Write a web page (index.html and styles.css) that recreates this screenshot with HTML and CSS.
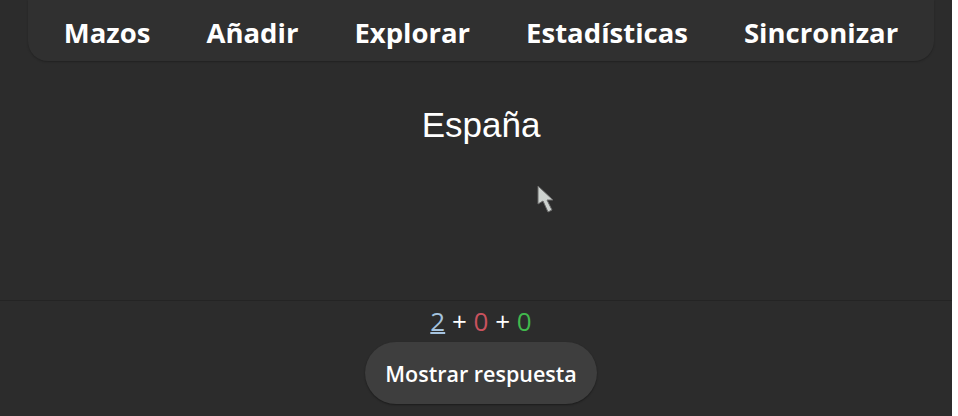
FILE: index.html
```html
<!DOCTYPE html>
<html lang="es">
<head>
<meta charset="utf-8">
<link rel="stylesheet" href="styles.css">
</head>
<body>
<div class="page">
  <div class="top">
    <nav class="navbar">
      <span class="nav-item">Mazos</span>
      <span class="nav-item">Añadir</span>
      <span class="nav-item">Explorar</span>
      <span class="nav-item">Estadísticas</span>
      <span class="nav-item">Sincronizar</span>
    </nav>
    <div class="card">
      <div class="question">España</div>
      <svg class="cursor" width="20" height="30" viewBox="0 0 20 30">
        <polygon points="1,1 1,19 6,16 11,27 15,25 10,15 16,15" fill="#cdd2cf" stroke="#6a6a6a" stroke-width="1"/>
      </svg>
    </div>
  </div>
  <div class="bottom">
    <div class="counts"><span class="new">2</span> + <span class="learn">0</span> + <span class="review">0</span></div>
    <button class="answer">Mostrar respuesta</button>
  </div>
</div>
</body>
</html>
```
FILE: styles.css
```css
html {
  background: #ffffff;
  margin: 0;
  height: 100%;
}
body {
  margin: 0;
  width: 952px;
  height: 416px;
  background: #2c2c2c;
  overflow: hidden;
}
.page {
  display: flex;
  flex-direction: column;
  height: 416px;
}
.top {
  height: 300px;
  display: flex;
  flex-direction: column;
  border-bottom: 1px solid #242424;
}
.navbar {
  margin-left: 28px;
  width: 906px;
  height: 61px;
  box-sizing: border-box;
  background: #303030;
  border-radius: 0 0 20px 20px;
  box-shadow: 0 1px 2px rgba(0, 0, 0, 0.25);
  display: flex;
  justify-content: center;
  align-items: flex-end;
  gap: 56px;
  padding-bottom: 13px;
  font-family: "Open Sans", "Noto Sans", sans-serif;
  font-weight: 700;
  font-size: 27.5px;
  color: #ffffff;
}
.nav-item {
  line-height: 30px;
}
.card {
  position: relative;
  padding-left: 10px;
  padding-top: 44px;
  text-align: center;
}
.question {
  font-family: "Liberation Sans", Arial, sans-serif;
  font-size: 35px;
  line-height: 40px;
  color: #ffffff;
}
.cursor {
  position: absolute;
  left: 537px;
  top: 124px;
}
.bottom {
  padding-left: 10px;
  display: flex;
  flex-direction: column;
  align-items: center;
  font-family: "Open Sans", "Noto Sans", sans-serif;
}
.counts {
  margin-top: 5px;
  font-size: 26px;
  line-height: 30px;
  height: 30px;
  color: #ffffff;
}
.new {
  color: #a5c3df;
  text-decoration: underline;
  text-decoration-thickness: 2px;
}
.learn {
  color: #c9525e;
}
.review {
  color: #41b94d;
}
.answer {
  margin-top: 6px;
  width: 232px;
  height: 62px;
  border: none;
  border-radius: 31px;
  background: #3e3e3e;
  box-shadow: 0 1px 2px rgba(0, 0, 0, 0.4);
  color: #ffffff;
  font-family: "Open Sans", "Noto Sans", sans-serif;
  font-weight: 600;
  font-size: 21.5px;
  padding: 0;
}
```
